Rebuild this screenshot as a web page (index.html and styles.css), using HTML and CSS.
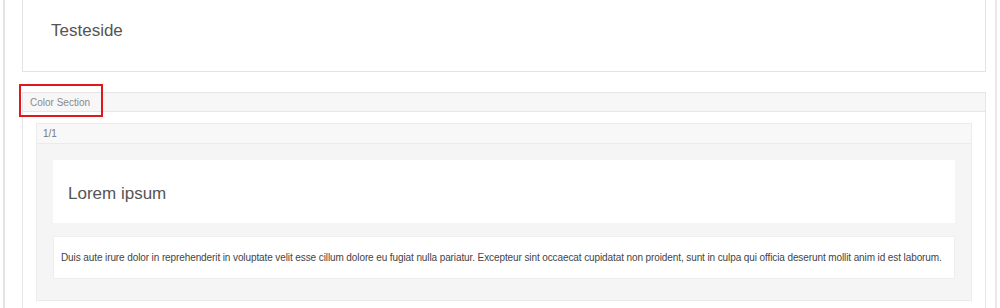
FILE: index.html
```html
<!DOCTYPE html>
<html>
<head>
<meta charset="utf-8">
<link rel="stylesheet" href="styles.css">
</head>
<body>
<div class="page">
  <div class="card">
    <h1 class="card-title">Testeside</h1>
  </div>
  <div class="section">
    <div class="section-head">
      <span class="section-label">Color Section</span>
      <span class="highlight"></span>
    </div>
    <div class="section-body">
      <div class="col">
        <div class="col-head">1/1</div>
        <div class="col-body">
          <div class="block heading-block">
            <h2 class="heading">Lorem ipsum</h2>
          </div>
          <div class="block text-block">
            <p class="text">Duis aute irure dolor in reprehenderit in voluptate velit esse cillum dolore eu fugiat nulla pariatur. Excepteur sint occaecat cupidatat non proident, sunt in culpa qui officia deserunt mollit anim id est laborum.</p>
          </div>
        </div>
      </div>
    </div>
  </div>
</div>
</body>
</html>
```
FILE: styles.css
```css
* { box-sizing: border-box; }
html, body { margin: 0; padding: 0; background: #fff; }
html { overflow: hidden; }
body {
  font-family: "Liberation Sans", Arial, sans-serif;
  color: #555;
  overflow: hidden;
  height: 308px;
}
.page {
  margin-left: 3px;
  width: 994px;
  height: 308px;
  border-left: 2px solid #e4e4e4;
  border-right: 2px solid #e8e8e8;
  padding: 0 9px 0 17px;
}
.card {
  height: 72px;
  border: 1px solid #e3e3e3;
  border-top: none;
  background: #fff;
  display: flex;
  align-items: center;
  padding: 0 0 9px 28px;
}
.card-title {
  margin: 0;
  font-size: 17px;
  font-weight: normal;
  color: #555;
}
.section {
  margin-top: 20px;
  border: 1px solid #e6e6e6;
  border-bottom: none;
  height: 216px;
}
.section-head {
  position: relative;
  height: 19px;
  background: #f7f7f7;
  border-bottom: 1px solid #e6e6e6;
  display: flex;
  align-items: center;
  padding-left: 7px;
}
.section-label {
  font-size: 10px;
  color: #8a8a8a;
}
.highlight {
  position: absolute;
  left: -4px;
  top: -9px;
  width: 84px;
  height: 33px;
  border: 2px solid #e0181e;
}
.section-body {
  padding: 11px 13px 0 13px;
}
.col {
  border: 1px solid #ebebeb;
}
.col-head {
  height: 20px;
  background: #f8f8f8;
  border-bottom: 1px solid #ebebeb;
  font-size: 10px;
  color: #777;
  padding: 4px 6px 0;
}
.col-body {
  background: #f5f5f5;
  padding: 16px 16px 21px;
  display: flex;
  flex-direction: column;
  gap: 13px;
}
.block {
  background: #fff;
}
.heading-block {
  height: 63px;
  display: flex;
  align-items: center;
  padding: 4px 0 0 15px;
}
.heading {
  margin: 0;
  font-size: 17px;
  font-weight: normal;
  color: #555;
}
.text-block {
  height: 43px;
  border: 1px solid #eeeeee;
  display: flex;
  align-items: center;
  padding-left: 7px;
}
.text {
  margin: 0;
  font-size: 10px;
  letter-spacing: -0.1px;
  color: #444;
  white-space: nowrap;
}
```
